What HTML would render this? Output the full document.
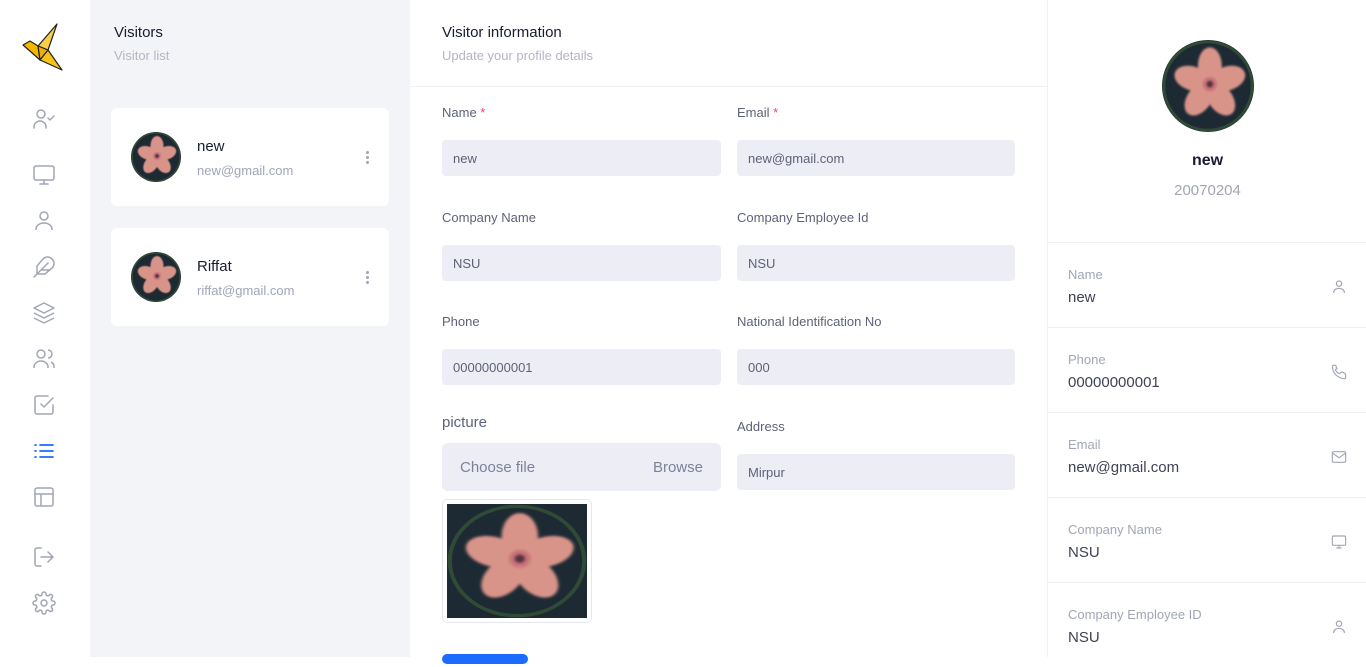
<!DOCTYPE html>
<html><head><style>
*{box-sizing:border-box;margin:0;padding:0}
body{width:1366px;height:657px;overflow:hidden;font-family:"Liberation Sans",sans-serif;background:#fff;position:relative;color:#3f4254}
.abs{position:absolute}
.side{left:0;top:0;width:90px;height:657px;background:#fff}
.ico{position:absolute;left:32px;width:24px;height:24px}
.list{left:90px;top:0;width:320px;height:657px;background:#f3f4f8}
.card{position:absolute;left:21px;width:278px;height:98px;background:#fff;border-radius:6px}
.card .nm{position:absolute;left:86px;top:30px;font-size:15px;color:#181c32;font-weight:500}
.card .em{position:absolute;left:86px;top:55px;font-size:13px;color:#a1a5b7}
.card .dots{position:absolute;left:255px;top:43px;width:4px}
.card .dots i{display:block;width:3px;height:3px;border-radius:50%;background:#a1a5b7;margin-bottom:2px}
.av{position:absolute;left:20px;top:24px;width:50px;height:50px;border-radius:50%;overflow:hidden}
.lbl{position:absolute;font-size:13px;color:#5e6278}
.inp{position:absolute;height:36px;background:#ecedf5;border-radius:4px;font-size:13px;color:#5e6278;padding:11px 11px}
.req{color:#f1416c}
.rp{left:1047px;top:0;width:319px;height:657px;border-left:1px solid #eff2f5}
.row{position:absolute;left:0;width:319px;height:85px;border-top:1px solid #eff2f5}
.row .l{position:absolute;left:20px;top:24px;font-size:13px;color:#a1a5b7}
.row .v{position:absolute;left:20px;top:46px;font-size:15px;color:#3f4254}
.row svg{position:absolute;left:283px;top:36px}
</style></head><body>
<svg width="0" height="0" style="position:absolute"><defs>
<filter id="bl"><feGaussianBlur stdDeviation="1.2"/></filter>
<symbol id="fl" viewBox="0 0 100 100">
<rect width="100" height="100" fill="#1e2a33"/>
<circle cx="50" cy="50" r="48" fill="none" stroke="#2f4a35" stroke-width="3"/>
<g fill="#d9948a" transform="translate(52,48)" filter="url(#bl)">
<ellipse cx="0" cy="-20" rx="13" ry="20"/>
<ellipse cx="0" cy="-20" rx="13" ry="20" transform="rotate(72)"/>
<ellipse cx="0" cy="-20" rx="13" ry="20" transform="rotate(144)"/>
<ellipse cx="0" cy="-20" rx="13" ry="20" transform="rotate(216)"/>
<ellipse cx="0" cy="-20" rx="13" ry="20" transform="rotate(288)"/>
<circle r="8" fill="#c9757a"/>
<circle r="4" fill="#5a3040"/></g></symbol></defs></svg>

<div class="abs side">
<svg class="abs" style="left:0;top:0" width="90" height="90" viewBox="0 0 90 90">
<g stroke="#222" stroke-width="1.2" stroke-linejoin="round">
<polygon points="23,45 30,41 38,46 40,60 31,52" fill="#f5b800"/>
<polygon points="38,46 57,24 48,50" fill="#f7d04a"/>
<polygon points="38,46 48,50 40,60" fill="#f0b000"/>
<polygon points="48,50 62,70 40,60" fill="#f5c21b"/>
</g></svg>
<svg class="ico" style="top:107px" viewBox="0 0 24 24" fill="none" stroke="#a1a5b7" stroke-width="1.5" stroke-linecap="round"><circle cx="9" cy="7" r="4"/><path d="M2 21v-1a6 6 0 0 1 12 0v1M16 11l2 2 4-4"/></svg>
<svg class="ico" style="top:163px" viewBox="0 0 24 24" fill="none" stroke="#a1a5b7" stroke-width="1.5" stroke-linecap="round"><rect x="2" y="3" width="20" height="14" rx="2"/><path d="M8 21h8M12 17v4"/></svg>
<svg class="ico" style="top:209px" viewBox="0 0 24 24" fill="none" stroke="#a1a5b7" stroke-width="1.5"><circle cx="12" cy="7" r="4"/><path d="M4 21v-1a8 6 0 0 1 16 0v1"/></svg>
<svg class="ico" style="top:255px" viewBox="0 0 24 24" fill="none" stroke="#a1a5b7" stroke-width="1.5" stroke-linecap="round"><path d="M20 4a6 6 0 0 0-9 0l-6 7v8h8l7-6a6 6 0 0 0 0-9zM16 8L2 22M17 15H9"/></svg>
<svg class="ico" style="top:301px" viewBox="0 0 24 24" fill="none" stroke="#a1a5b7" stroke-width="1.5" stroke-linejoin="round"><path d="M12 2L2 7l10 5 10-5-10-5zM2 17l10 5 10-5M2 12l10 5 10-5"/></svg>
<svg class="ico" style="top:347px" viewBox="0 0 24 24" fill="none" stroke="#a1a5b7" stroke-width="1.5"><circle cx="9" cy="7" r="4"/><path d="M2 21v-1a7 6 0 0 1 14 0v1M16 3a4 4 0 0 1 0 8M19 15a5 5 0 0 1 3 5v1"/></svg>
<svg class="ico" style="top:393px" viewBox="0 0 24 24" fill="none" stroke="#a1a5b7" stroke-width="1.5" stroke-linecap="round"><path d="M9 11l3 3 9-9M21 12v7a2 2 0 0 1-2 2H5a2 2 0 0 1-2-2V5a2 2 0 0 1 2-2h11"/></svg>
<svg class="ico" style="top:439px" viewBox="0 0 24 24" fill="none" stroke="#1b6bff" stroke-width="1.7" stroke-linecap="round"><path d="M8 6h13M8 12h13M8 18h13M3 6h1M3 12h1M3 18h1"/></svg>
<svg class="ico" style="top:485px" viewBox="0 0 24 24" fill="none" stroke="#a1a5b7" stroke-width="1.5"><rect x="3" y="3" width="18" height="18" rx="2"/><path d="M3 9h18M9 21V9"/></svg>
<svg class="ico" style="top:545px" viewBox="0 0 24 24" fill="none" stroke="#a1a5b7" stroke-width="1.5" stroke-linecap="round"><path d="M9 21H5a2 2 0 0 1-2-2V5a2 2 0 0 1 2-2h4M16 17l5-5-5-5M21 12H9"/></svg>
<svg class="ico" style="top:591px" viewBox="0 0 24 24" fill="none" stroke="#a1a5b7" stroke-width="1.5"><circle cx="12" cy="12" r="3"/><path d="M19.4 15a1.7 1.7 0 0 0 .3 1.8l.1.1a2 2 0 1 1-2.8 2.8l-.1-.1a1.7 1.7 0 0 0-2.9 1.2V21a2 2 0 1 1-4 0v-.1a1.7 1.7 0 0 0-2.9-1.2l-.1.1a2 2 0 1 1-2.8-2.8l.1-.1A1.7 1.7 0 0 0 3.1 14H3a2 2 0 1 1 0-4h.1a1.7 1.7 0 0 0 1.2-2.9l-.1-.1a2 2 0 1 1 2.8-2.8l.1.1A1.7 1.7 0 0 0 10 3.1V3a2 2 0 1 1 4 0v.1a1.7 1.7 0 0 0 2.9 1.2l.1-.1a2 2 0 1 1 2.8 2.8l-.1.1A1.7 1.7 0 0 0 20.9 10H21a2 2 0 1 1 0 4h-.1a1.7 1.7 0 0 0-1.5 1z"/></svg>
</div>

<div class="abs list">
<div class="abs" style="left:24px;top:24px;font-size:15px;color:#181c32;font-weight:500">Visitors</div>
<div class="abs" style="left:24px;top:48px;font-size:13px;color:#b5b5c3">Visitor list</div>
<div class="card" style="top:108px"><div class="av"><svg width="50" height="50"><use href="#fl"/></svg></div><div class="nm">new</div><div class="em">new@gmail.com</div><div class="dots"><i></i><i></i><i></i></div></div>
<div class="card" style="top:228px"><div class="av"><svg width="50" height="50"><use href="#fl"/></svg></div><div class="nm">Riffat</div><div class="em">riffat@gmail.com</div><div class="dots"><i></i><i></i><i></i></div></div>
</div>

<div class="abs" style="left:410px;top:0;width:637px;height:657px">
<div class="abs" style="left:32px;top:24px;font-size:15px;color:#181c32;font-weight:500">Visitor information</div>
<div class="abs" style="left:32px;top:48px;font-size:13px;color:#b5b5c3">Update your profile details</div>
<div class="abs" style="left:0;top:86px;width:637px;border-top:1px solid #eff2f5"></div>
</div>
<div class="lbl" style="left:442px;top:105px">Name <span class="req">*</span></div>
<div class="lbl" style="left:737px;top:105px">Email <span class="req">*</span></div>
<div class="inp" style="left:442px;top:140px;width:279px">new</div>
<div class="inp" style="left:737px;top:140px;width:278px">new@gmail.com</div>
<div class="lbl" style="left:442px;top:210px">Company Name</div>
<div class="lbl" style="left:737px;top:210px">Company Employee Id</div>
<div class="inp" style="left:442px;top:245px;width:279px">NSU</div>
<div class="inp" style="left:737px;top:245px;width:278px">NSU</div>
<div class="lbl" style="left:442px;top:314px">Phone</div>
<div class="lbl" style="left:737px;top:314px">National Identification No</div>
<div class="inp" style="left:442px;top:349px;width:279px">00000000001</div>
<div class="inp" style="left:737px;top:349px;width:278px">000</div>
<div class="lbl" style="left:442px;top:414px;font-size:15px">picture</div>
<div class="inp" style="left:442px;top:443px;width:279px;height:48px;font-size:15px;padding:16px 18px;border-radius:6px;color:#7e8299">Choose file<span style="position:absolute;right:18px">Browse</span></div>
<div class="lbl" style="left:737px;top:419px">Address</div>
<div class="inp" style="left:737px;top:454px;width:278px">Mirpur</div>
<div class="abs" style="left:442px;top:499px;width:150px;height:124px;border:1px solid #e4e6ef;border-radius:5px;padding:4px"><svg width="140" height="114" viewBox="0 0 100 100" preserveAspectRatio="none"><use href="#fl"/></svg></div>
<div class="abs" style="left:442px;top:654px;width:86px;height:10px;background:#1b6bff;border-radius:5px"></div>

<div class="abs rp">
<div class="abs" style="left:114px;top:40px;width:92px;height:92px;border-radius:50%;overflow:hidden"><svg width="92" height="92"><use href="#fl"/></svg></div>
<div class="abs" style="left:0;width:319px;top:152px;text-align:center;font-size:16px;font-weight:bold;color:#181c32">new</div>
<div class="abs" style="left:0;width:319px;top:182px;text-align:center;font-size:15px;color:#a1a5b7">20070204</div>
<div class="row" style="top:242px"><div class="l">Name</div><div class="v">new</div><svg width="16" height="16" viewBox="0 0 24 24" fill="none" stroke="#a1a5b7" stroke-width="1.7"><circle cx="12" cy="7" r="4"/><path d="M4 21v-1a8 6 0 0 1 16 0v1"/></svg></div>
<div class="row" style="top:327px"><div class="l">Phone</div><div class="v">00000000001</div><svg width="16" height="16" viewBox="0 0 24 24" fill="none" stroke="#a1a5b7" stroke-width="1.7"><path d="M22 17v3a2 2 0 0 1-2 2A19 19 0 0 1 2 4a2 2 0 0 1 2-2h3l2 5-2.5 1.5a11 11 0 0 0 6 6L16 12l5 2z"/></svg></div>
<div class="row" style="top:412px"><div class="l">Email</div><div class="v">new@gmail.com</div><svg width="16" height="16" viewBox="0 0 24 24" fill="none" stroke="#a1a5b7" stroke-width="1.7"><rect x="2" y="4" width="20" height="16" rx="2"/><path d="M2 6l10 7 10-7"/></svg></div>
<div class="row" style="top:497px"><div class="l">Company Name</div><div class="v">NSU</div><svg width="16" height="16" viewBox="0 0 24 24" fill="none" stroke="#a1a5b7" stroke-width="1.7"><rect x="2" y="3" width="20" height="14" rx="2"/><path d="M8 21h8M12 17v4"/></svg></div>
<div class="row" style="top:582px"><div class="l">Company Employee ID</div><div class="v">NSU</div><svg width="16" height="16" viewBox="0 0 24 24" fill="none" stroke="#a1a5b7" stroke-width="1.7"><circle cx="12" cy="7" r="4"/><path d="M4 21v-1a8 6 0 0 1 16 0v1"/></svg></div>
</div>
</body></html>
